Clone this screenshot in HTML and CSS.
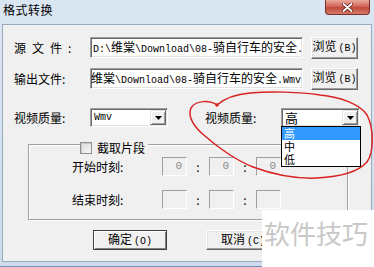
FILE: index.html
```html
<!DOCTYPE html>
<html lang="zh-CN">
  <head>
    <meta charset="UTF-8" />
    <title>格式转换</title>
    <link rel="stylesheet" href="styles.css">
  </head>

  <body>
    <div class="window">
      <div class="titlebar">
        <span class="title">格式转换</span>
        <span class="close">
          <svg width="11" height="9" viewBox="0 0 11 9">
            <path d="M1.5 1 L9.5 8 M9.5 1 L1.5 8" stroke="#5a1a1a" stroke-width="3.4" stroke-linecap="round" />
            <path d="M1.5 1 L9.5 8 M9.5 1 L1.5 8" stroke="#ffffff" stroke-width="1.8" stroke-linecap="round" />
          </svg>
        </span>
      </div>

      <div class="client">
        <div class="row">
          <span class="label spaced">源文件:</span>
          <div class="textbox">
            <span class="val"><span class="m">D:\</span>维棠<span class="m">\Download\08-</span>骑自行车的安全<span class="m">.</span></span>
          </div>
          <button class="btn browse">浏览<span class="m">(B)</span></button>
        </div>

        <div class="row second">
          <span class="label">输出文件:</span>
          <div class="textbox tail">
            <span class="val">维棠<span class="m">\Download\08-</span>骑自行车的安全<span class="m">.Wmv</span></span>
          </div>
          <button class="btn browse">浏览<span class="m">(B)</span></button>
        </div>

        <div class="row third">
          <span class="label">视频质量:</span>
          <div class="combo">
            <span class="combo-text m">Wmv</span>
            <span class="arrow">
              <svg width="7" height="4" viewBox="0 0 7 4"><path d="M0 0 H7 L3.5 4 Z" fill="#000" /></svg>
            </span>
          </div>
          <span class="label gap">视频质量:</span>
          <div class="combo wide">
            <span class="combo-text big">高</span>
            <span class="arrow">
              <svg width="7" height="4" viewBox="0 0 7 4"><path d="M0 0 H7 L3.5 4 Z" fill="#000" /></svg>
            </span>
            <ul class="droplist">
              <li class="selected">高</li>
              <li>中</li>
              <li>低</li>
            </ul>
          </div>
        </div>

        <fieldset class="group">
          <legend><span class="legend-in"><span class="checkbox"></span>截取片段</span></legend>
          <div class="trow">
            <span class="tlabel">开始时刻:</span>
            <span class="tbox">0</span><span class="colon">:</span>
            <span class="tbox">0</span><span class="colon">:</span>
            <span class="tbox">0</span>
          </div>
          <div class="trow">
            <span class="tlabel">结束时刻:</span>
            <span class="tbox"></span><span class="colon">:</span>
            <span class="tbox"></span><span class="colon">:</span>
            <span class="tbox"></span>
          </div>
        </fieldset>

        <div class="actions">
          <button class="btn action default">确定<span class="m">(O)</span></button>
          <button class="btn action">取消<span class="m">(C)</span></button>
        </div>
      </div>

      <svg class="mark" width="374" height="267" viewBox="0 0 374 267">
        <path d="M217,105 C210,100 196,100 191,108 C187,117 195,128 205,136 C215,145 235,160 253,167 C272,174 295,179 317,178 C338,177 358,172 367,162 C374,152 374,128 367,115 C360,104 340,97 320,95 C300,92 270,91 250,93 C238,94 225,98 217,105" fill="none" stroke="#d92323" stroke-width="1.5" />
        <circle cx="217" cy="105" r="1.8" fill="#d92323" />
      </svg>

      <div class="watermark">软件技巧</div>
    </div>
  </body>
</html>
```

FILE: styles.css
```css
* {
  box-sizing: border-box;
}

body {
  margin: 0;
  width: 374px;
  height: 267px;
  overflow: hidden;
  font-family: "Noto Sans CJK SC", "Liberation Sans", sans-serif;
  font-size: 12px;
  color: #000;
}

.m {
  font-family: "Liberation Mono", "DejaVu Sans Mono", monospace;
  font-size: 10px;
}

.window {
  position: relative;
  width: 374px;
  height: 267px;
  padding: 0 2px 4px 2px;
  display: flex;
  flex-direction: column;
  background: linear-gradient(#dbe6f3, #cddbec);
  border-bottom: 1px solid #6f8fb8;
}

.titlebar {
  height: 24px;
  display: flex;
  align-items: flex-start;
}

.title {
  padding: 3px 0 0 1px;
  line-height: 14px;
  letter-spacing: 0.5px;
}

.close {
  margin-left: auto;
  margin-right: 2px;
  width: 45px;
  height: 15px;
  display: flex;
  justify-content: center;
  align-items: center;
  border: 1px solid #7b3030;
  border-top: none;
  border-radius: 0 0 4px 4px;
  background: linear-gradient(#e9a99b, #d2675a 45%, #c04a3c 55%, #d47a66);
}

.client {
  flex: 1;
  background: #f0f0f0;
  border: 1px solid #9aa9bc;
  padding: 12px 0 0 11px;
}

.row {
  display: flex;
  align-items: center;
  height: 21px;
}

.row.second {
  margin-top: 10px;
}

.row.third {
  margin-top: 19px;
  height: 19px;
}

.label {
  width: 76px;
  line-height: 14px;
  white-space: nowrap;
}

.label.spaced {
  letter-spacing: 6px;
}

.label.gap {
  margin-left: 37px;
}

.textbox {
  width: 213px;
  height: 21px;
  display: flex;
  align-items: center;
  overflow: hidden;
  padding: 0 1px 0 2px;
  background: #fff;
  border: 1px solid;
  border-color: #a0a0a0 #ffffff #ffffff #a0a0a0;
  box-shadow: inset 1px 1px 0 #696969, inset -1px -1px 0 #e3e3e3;
  white-space: nowrap;
}

.textbox .val {
  flex-shrink: 0;
  line-height: 15px;
}

.textbox.tail {
  justify-content: flex-end;
}

.btn {
  font-family: "Noto Sans CJK SC", "Liberation Sans", sans-serif;
  font-size: 12px;
  color: #000;
  padding: 0;
  line-height: 14px;
  background: #f0f0f0;
  border: 1px solid;
  border-color: #ffffff #696969 #696969 #ffffff;
  box-shadow: inset -1px -1px 0 #a0a0a0, inset 1px 1px 0 #e3e3e3;
}

.btn .m {
  margin-left: 2px;
}

.browse {
  margin-left: 8px;
  width: 47px;
  height: 22px;
}

.combo {
  position: relative;
  width: 78px;
  height: 19px;
  display: flex;
  align-items: center;
  background: #fff;
  border: 1px solid;
  border-color: #a0a0a0 #ffffff #ffffff #a0a0a0;
  box-shadow: inset 1px 1px 0 #696969, inset -1px -1px 0 #e3e3e3;
}

.combo.wide {
  width: 79px;
}

.combo-text {
  flex: 1;
  padding-left: 3px;
  line-height: 14px;
}

.combo-text.big {
  font-size: 13px;
}

.arrow {
  width: 16px;
  height: 15px;
  margin: 1px 1px 1px 0;
  display: flex;
  justify-content: center;
  align-items: center;
  background: #f0f0f0;
  border: 1px solid;
  border-color: #e3e3e3 #696969 #696969 #e3e3e3;
  box-shadow: inset 1px 1px 0 #ffffff, inset -1px -1px 0 #a0a0a0;
}

.droplist {
  position: absolute;
  top: 17px;
  left: -1px;
  width: 80px;
  margin: 0;
  padding: 0;
  list-style: none;
  background: #fff;
  border: 1px solid #000;
  z-index: 2;
}

.droplist li {
  height: 13px;
  line-height: 13px;
  font-size: 11px;
  padding-left: 2px;
}

.droplist li.selected {
  background: #3399ff;
  color: #fff;
}

.group {
  margin: 7px 0 0 14px;
  width: 320px;
  padding: 3px 0 10px 43px;
  border: 1px solid #a0a0a0;
  box-shadow: inset 1px 1px 0 #fff, 1px 1px 0 #fff;
  min-inline-size: 0;
}

.group legend {
  margin-left: 8px;
  padding: 8px 3px 0 0;
  line-height: 12px;
  background: #f0f0f0;
}

.legend-in {
  display: flex;
  align-items: center;
  gap: 5px;
}

.checkbox {
  width: 12px;
  height: 12px;
  border: 1px solid #8e8f8f;
  background: linear-gradient(135deg, #dcdcdc, #f6f6f6);
  box-shadow: inset 1px 1px 0 #c8c8c8;
}

.trow {
  display: flex;
  align-items: center;
  height: 19px;
}

.trow + .trow {
  margin-top: 14px;
}

.tlabel {
  width: 90px;
  line-height: 14px;
}

.tbox {
  width: 25px;
  height: 19px;
  padding-right: 4px;
  text-align: right;
  font-family: "Liberation Mono", monospace;
  font-size: 11px;
  line-height: 17px;
  color: #8a8a8a;
  border: 1px solid;
  border-color: #a0a0a0 #ffffff #ffffff #a0a0a0;
}

.colon {
  width: 22px;
  text-align: center;
  line-height: 14px;
}

.actions {
  display: flex;
  gap: 39px;
  margin-top: 10px;
  padding-left: 79px;
}

.action {
  width: 74px;
  height: 20px;
}

.action.default {
  border-color: #3c3c3c;
  box-shadow: inset 1px 1px 0 #ffffff, inset -1px -1px 0 #808080;
}

.mark {
  position: absolute;
  top: 0;
  left: 0;
  pointer-events: none;
  z-index: 3;
}

.watermark {
  position: absolute;
  left: 262px;
  top: 210px;
  width: 112px;
  height: 57px;
  padding: 9px 0 0 2px;
  background: #fff;
  color: #c8c8c8;
  font-size: 26px;
  line-height: 28px;
  white-space: nowrap;
  z-index: 4;
}
```
